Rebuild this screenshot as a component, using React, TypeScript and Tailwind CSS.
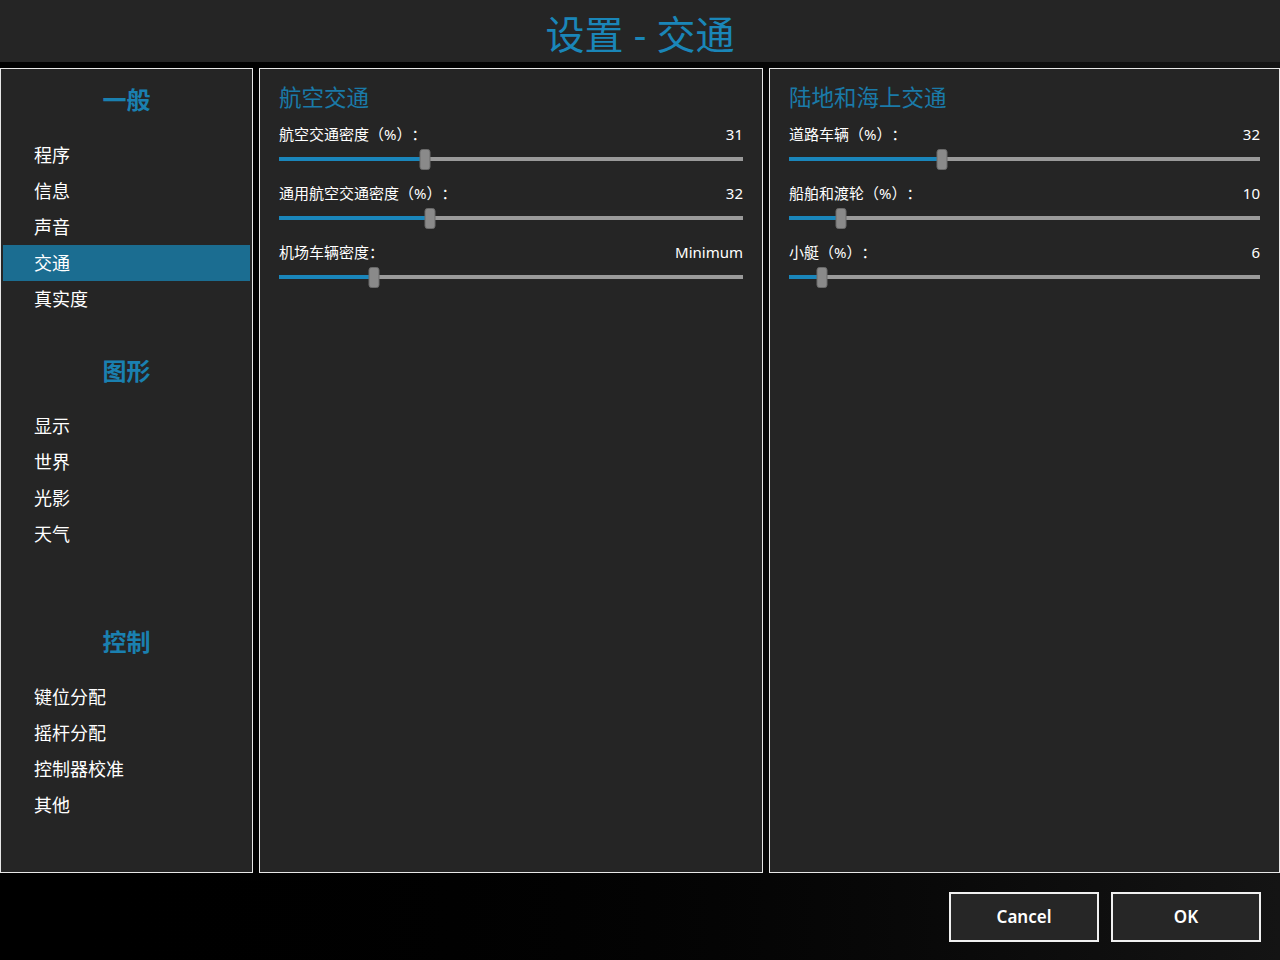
import React from "react";

const FONT = { fontFamily: '"Noto Sans", "Noto Sans CJK SC", sans-serif' };

type Section = { title: string; items: string[] };

const sections: Section[] = [
  { title: "一般", items: ["程序", "信息", "声音", "交通", "真实度"] },
  { title: "图形", items: ["显示", "世界", "光影", "天气"] },
  { title: "控制", items: ["键位分配", "摇杆分配", "控制器校准", "其他"] },
];

function Slider({ label, value, pos }: { label: string; value: string; pos: number }) {
  return (
    <div className="flex h-[59px] flex-col">
      <div className="flex h-[22px] items-center justify-between text-[15px] text-white">
        <span className="[text-spacing-trim:space-all]">{label}</span>
        <span>{value}</span>
      </div>
      <div className="relative mt-[4px] h-[20px]">
        <div className="absolute left-0 right-0 top-[8px] h-[4px] bg-[#9a9a9a]" />
        <div
          className="absolute left-0 top-[8px] h-[4px] bg-[#1a86bb]"
          style={{ width: `${pos}%` }}
        />
        <div
          className="absolute top-0 h-[21px] w-[11px] -translate-x-1/2 rounded-[3px] border border-[#6a6a6a] bg-[#8a8a8a]"
          style={{ left: `${pos}%` }}
        />
      </div>
    </div>
  );
}

function Panel({
  title,
  rows,
  className,
}: {
  title: string;
  rows: { label: string; value: string; pos: number }[];
  className: string;
}) {
  return (
    <div className={`flex flex-col border border-[#e8e8e8] bg-[#252525] pl-[19px] pr-[19px] pt-[11px] ${className}`}>
      <div className="h-[36px] text-[22.5px] leading-[36px] text-[#1a7aa8]">{title}</div>
      <div className="mt-[7px] flex flex-col">
        {rows.map((r) => (
          <Slider key={r.label} {...r} />
        ))}
      </div>
    </div>
  );
}

export default function App() {
  return (
    <div className="flex h-[960px] w-[1280px] flex-col bg-gradient-to-r from-[#000] to-[#141414]" style={FONT}>
      <div className="flex h-[62px] items-center justify-center bg-[#252525] pt-[4px]">
        <span className="text-[39px] leading-none text-[#1a86b8]">设置 - 交通</span>
      </div>
      <div className="mt-[6px] flex h-[805px] gap-[6px]">
        <div className="flex w-[253px] flex-col overflow-hidden border border-[#e8e8e8] bg-[#252525] px-[2px] pt-[13px]">
          {sections.map((s) => (
            <div key={s.title} className="flex h-[271px] shrink-0 flex-col">
              <div className="h-[36px] text-center text-[24px] font-bold leading-[36px] text-[#1a80b0]">
                {s.title}
              </div>
              <div className="mt-[19px] flex flex-col">
                {s.items.map((it) => (
                  <div
                    key={it}
                    className={`flex h-[36px] items-center pl-[31px] text-[18px] text-white ${
                      it === "交通" ? "bg-[#1b6d91]" : ""
                    }`}
                  >
                    {it}
                  </div>
                ))}
              </div>
            </div>
          ))}
        </div>
        <Panel
          className="w-[504px]"
          title="航空交通"
          rows={[
            { label: "航空交通密度（%）：", value: "31", pos: 31.5 },
            { label: "通用航空交通密度（%）：", value: "32", pos: 32.5 },
            { label: "机场车辆密度：", value: "Minimum", pos: 20.5 },
          ]}
        />
        <Panel
          className="w-[511px]"
          title="陆地和海上交通"
          rows={[
            { label: "道路车辆（%）：", value: "32", pos: 32.5 },
            { label: "船舶和渡轮（%）：", value: "10", pos: 11 },
            { label: "小艇（%）：", value: "6", pos: 7 },
          ]}
        />
      </div>
      <div className="flex flex-1 items-center justify-end gap-[12px] pr-[19px]">
        <button className="h-[50px] w-[150px] border-2 border-[#f0f0f0] bg-[#262626] text-[17px] font-semibold text-white">
          Cancel
        </button>
        <button className="h-[50px] w-[150px] border-2 border-[#f0f0f0] bg-[#262626] text-[17px] font-semibold text-white">
          OK
        </button>
      </div>
    </div>
  );
}
